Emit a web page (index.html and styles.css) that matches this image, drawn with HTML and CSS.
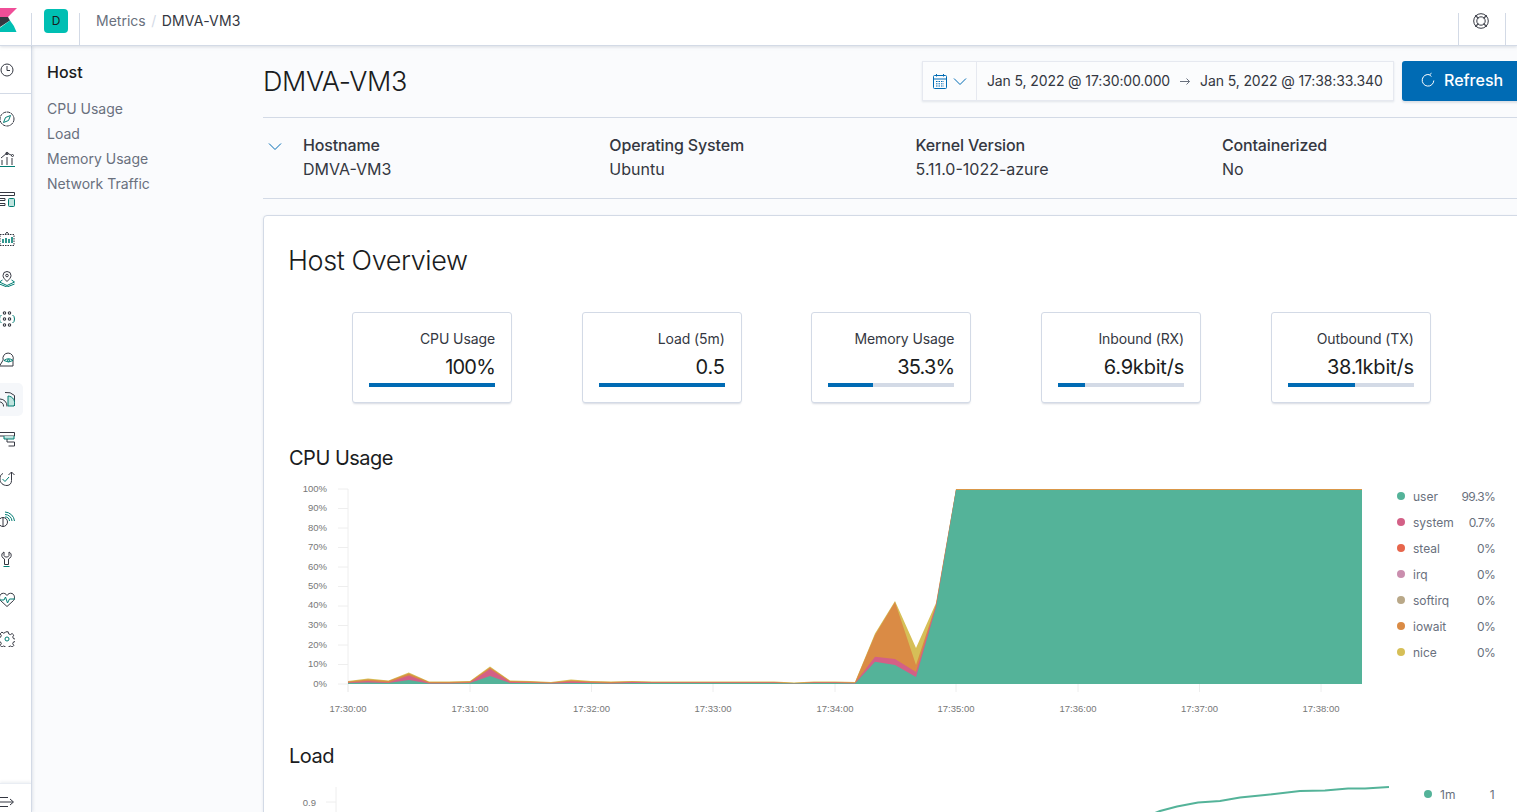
FILE: index.html
```html
<!DOCTYPE html>
<html lang="en">
<head>
<meta charset="utf-8">
<title>DMVA-VM3 - Metrics</title>
<link rel="stylesheet" href="styles.css">
</head>
<body>
<header class="topbar">
  <div class="logo-cell">
    <svg class="logo" viewBox="0 0 18 32" width="18" height="32">
      <polygon points="-6,8 17,8 8,17 -6,17" fill="#f04e98"/>
      <polygon points="-6,17 8,17 10,20.500 -6,31" fill="#343741"/>
      <path d="M-6 32 L10 20.500 Q14 25 16.500 32 Z" fill="#00bfb3"/>
    </svg>
  </div>
  <div class="space-cell"><span class="space-badge">D</span></div>
  <nav class="crumbs">
    <span class="crumb-link">Metrics</span>
    <span class="crumb-sep">/</span>
    <span class="crumb-current">DMVA-VM3</span>
  </nav>
  <div class="help-cell">
    <svg viewBox="0 0 16 16" width="16" height="16" fill="none" stroke="#343741">
      <circle cx="8" cy="8" r="7.300"/>
      <circle cx="8" cy="8" r="4.200"/>
      <path d="M2.500 2l3 3.200M2 2.500l3.200 3M13.500 2l-3 3.200M14 2.500l-3.200 3M2.500 14l3-3.200M2 13.500l3.200-3M13.500 14l-3-3.200M14 13.500l-3.200-3"/>
    </svg>
  </div>
  <div class="end-cell"></div>
</header>

<div class="shell">
  <aside class="rail">
    <div class="rail-top">
      <svg class="ico" viewBox="0 0 16 16" fill="none" stroke="#343741"><circle cx="8" cy="8" r="6"/><path d="M8 4v4.500h3"/></svg>
    </div>
    <ul class="rail-list">
      <li class="rail-item"><svg class="ico" viewBox="0 0 16 16" fill="none" stroke="#343741"><circle cx="8" cy="8" r="7" stroke-dasharray="3.500 .6"/><path d="M11.500 4.500L9.500 9.500 4.500 11.500 6.500 6.500Z" stroke="#017d73"/></svg></li>
      <li class="rail-item"><svg class="ico" viewBox="0 0 16 16" fill="none" stroke="#343741"><path d="M2 7l6-5 5 2.500"/><circle cx="8" cy="2.500" r="1.200"/><circle cx="13.500" cy="4.500" r="1"/><path d="M3 9v5M8 6v8M13 7v7"/><path d="M0 15.500h16" stroke="#017d73"/></svg></li>
      <li class="rail-item"><svg class="ico" viewBox="0 0 16 16" fill="none" stroke="#343741"><path d="M0 1.500h15.500v3H0"/><path d="M0 7.500h6v2H0M0 12.500h6v2H0"/><rect x="9.500" y="7.500" width="6" height="8" rx="1" stroke="#017d73" fill="#bfe4df"/></svg></li>
      <li class="rail-item"><svg class="ico" viewBox="0 0 16 16" fill="none" stroke="#343741"><path d="M1 3.500h14v11H1z" stroke-dasharray="1.500 1"/><path d="M6 3.500L8 1l2 2.500"/><path d="M4 12V8M7 12V7M10 12V8M13 12V6" stroke="#017d73" stroke-width="1.600"/></svg></li>
      <li class="rail-item"><svg class="ico" viewBox="0 0 16 16" fill="none" stroke="#343741"><path d="M8 10.500C5.500 8 4 6.500 4 4.500a4 4 0 0 1 8 0c0 2-1.500 3.500-4 6z"/><circle cx="8" cy="4.500" r="1.300"/><path d="M3.500 9L.5 11 8 14.500 15.500 11l-3-2M.5 13L8 16l7.500-3" stroke="#017d73"/></svg></li>
      <li class="rail-item"><svg class="ico" viewBox="0 0 16 16" fill="none" stroke="#343741"><g stroke-width="1.100"><circle cx="5.500" cy="2" r="1.200"/><circle cx="10.500" cy="2" r="1.200"/><circle cx="5.500" cy="8" r="1.200"/><circle cx="10.500" cy="8" r="1.200"/><circle cx="5.500" cy="14" r="1.200"/><circle cx="10.500" cy="14" r="1.200"/></g><path d="M2.500 4Q.5 5 .5 8t2 4M13.500 4q2 1 2 4t-2 4" stroke="#017d73"/></svg></li>
      <li class="rail-item"><svg class="ico" viewBox="0 0 16 16" fill="none" stroke="#343741"><path d="M.5 15L4.200 9A5.200 5.200 0 1 1 14 9V15Z"/><path d="M5 9.500Q9.500 6 14 9.500 9.500 12.500 5 9.500z" stroke="#017d73"/><circle cx="9.500" cy="9.300" r="1" stroke="#017d73"/></svg></li>
      <li class="rail-item is-active"><svg class="ico" viewBox="0 0 16 16" fill="none" stroke="#343741"><path d="M1 8a7 7 0 0 1 7 7.500M0 11a4 4 0 0 1 4.500 4.500"/><path d="M6 1.500a11 11 0 0 1 9.500 3V15"/><path d="M9 5a7 7 0 0 1 6 10H9z" stroke="#017d73" fill="#bfe4df"/></svg></li>
      <li class="rail-item"><svg class="ico" viewBox="0 0 16 16" fill="none" stroke="#343741"><path d="M0 1.500h15.500v3.500H0"/><path d="M5 5v3h10V5" stroke="#017d73" fill="#bfe4df"/><path d="M8 8v3h7.500v4H9.500"/></svg></li>
      <li class="rail-item"><svg class="ico" viewBox="0 0 16 16" fill="none" stroke="#343741"><path d="M4 2.500C1.500 3.500 1 5.500 1 8c0 4 3 6.500 7 6.500 3 0 4.500-2.500 4.500-5V1"/><path d="M9.500 4l3-3 3 3"/><path d="M3.500 8l2.500 2.500L10 6" stroke="#017d73"/></svg></li>
      <li class="rail-item"><svg class="ico" viewBox="0 0 16 16" fill="none" stroke="#343741"><path d="M6 1a10 10 0 0 1 9.500 9M6 3.500a7 7 0 0 1 7 6.500M6 6a4 4 0 0 1 4.500 4" stroke="#017d73"/><circle cx="4" cy="11" r="4.500"/><path d="M4 6.500v9"/></svg></li>
      <li class="rail-item"><svg class="ico" viewBox="0 0 16 16" fill="none" stroke="#343741"><path d="M5 1C3 2 2.500 3.500 3 5.500c.4 1.200 1.500 2 2.500 2.500v5.500h4V8c1-.5 2.100-1.300 2.500-2.500C12.500 3.500 12 2 10 1v3.500L8.700 6H6.300L5 4.500z"/><path d="M4.500 15.500h6" stroke="#017d73"/></svg></li>
      <li class="rail-item"><svg class="ico" viewBox="0 0 16 16" fill="none" stroke="#343741"><path d="M8 15.500L1.500 9.500C0 8 0 3.500 3 2.500c2-.7 4 .2 5 2 1-1.800 3-2.700 5-2 3 1 3 5.500 1.500 7z"/><path d="M0 9h5l1.500-3 2 6L10.500 8H16" stroke="#017d73"/></svg></li>
      <li class="rail-item"><svg class="ico" viewBox="0 0 16 16" fill="none" stroke="#343741"><path d="M6.800.8h2.400l.4 2 1.800.8 1.700-1.100 1.700 1.700-1.100 1.700.8 1.800 2 .4v2.400l-2 .4-.8 1.800 1.100 1.700-1.700 1.700-1.700-1.100-1.800.8-.4 2H6.800l-.4-2-1.800-.8-1.700 1.100-1.700-1.700 1.100-1.700-.8-1.800-2-.4V6.700l2-.4.8-1.800-1.100-1.700 1.700-1.700 1.700 1.100 1.800-.8z"/><circle cx="8" cy="8" r="2" stroke="#017d73"/></svg></li>
    </ul>
    <div class="rail-foot">
      <svg class="ico" viewBox="0 0 16 16" fill="none" stroke="#343741"><path d="M0 3.500h9M0 8h14M0 12.500h9M11 5l3.500 3-3.500 3"/></svg>
    </div>
  </aside>

  <aside class="sidenav">
    <h2 class="sidenav-title">Host</h2>
    <ul class="sidenav-list">
      <li>CPU Usage</li>
      <li>Load</li>
      <li>Memory Usage</li>
      <li>Network Traffic</li>
    </ul>
  </aside>

  <main class="main">
    <div class="page-head">
      <h1 class="page-title">DMVA-VM3</h1>
      <div class="time-picker">
        <div class="time-quick">
          <svg viewBox="0 0 16 16" width="16" height="16" fill="none" stroke="#006bb4"><rect x="1.500" y="2.500" width="13" height="13" rx="1"/><path d="M1.500 6h13"/><path d="M4.500 1v2.500M11.500 1v2.500"/><path d="M4 8.500h8M4 10.800h8M4 13h8" stroke-dasharray="1.500 1"/></svg>
          <svg viewBox="0 0 16 16" width="16" height="16" fill="none" stroke="#006bb4"><path d="M2 5.500l6 6 6-6"/></svg>
        </div>
        <div class="time-range">
          <span>Jan 5, 2022 @ 17:30:00.000</span>
          <svg viewBox="0 0 12 12" width="12" height="12" fill="none" stroke="#69707d"><path d="M1 6.500h9.500M7.500 3.500l3 3-3 3"/></svg>
          <span>Jan 5, 2022 @ 17:38:33.340</span>
        </div>
      </div>
      <button class="refresh" type="button">
        <svg viewBox="0 0 16 16" width="16" height="16" fill="none" stroke="#fff"><path d="M9.500 2.700a5.800 5.800 0 1 0 4.300 5.800"/><path d="M11.500 1.200l-2 1.600 1.800 1.800"/></svg>
        <span>Refresh</span>
      </button>
    </div>

    <section class="summary">
      <svg class="summary-chev" viewBox="0 0 16 16" width="16" height="16" fill="none" stroke="#006bb4"><path d="M2 5.500l6 6 6-6"/></svg>
      <dl class="summary-col"><dt>Hostname</dt><dd>DMVA-VM3</dd></dl>
      <dl class="summary-col"><dt>Operating System</dt><dd>Ubuntu</dd></dl>
      <dl class="summary-col"><dt>Kernel Version</dt><dd>5.11.0-1022-azure</dd></dl>
      <dl class="summary-col"><dt>Containerized</dt><dd>No</dd></dl>
    </section>

    <section class="panel">
      <h2 class="panel-title">Host Overview</h2>
      <div class="stats">
        <article class="stat"><div class="stat-label">CPU Usage</div><div class="stat-value stat-pct">100%</div><div class="meter"><div class="meter-fill" style="width:100%"></div></div></article>
        <article class="stat"><div class="stat-label">Load (5m)</div><div class="stat-value">0.5</div><div class="meter"><div class="meter-fill" style="width:100%"></div></div></article>
        <article class="stat"><div class="stat-label">Memory Usage</div><div class="stat-value stat-pct">35.3%</div><div class="meter"><div class="meter-fill" style="width:35.3%"></div></div></article>
        <article class="stat"><div class="stat-label">Inbound (RX)</div><div class="stat-value">6.9kbit/s</div><div class="meter"><div class="meter-fill" style="width:21%"></div></div></article>
        <article class="stat"><div class="stat-label">Outbound (TX)</div><div class="stat-value">38.1kbit/s</div><div class="meter"><div class="meter-fill" style="width:53%"></div></div></article>
      </div>

      <h3 class="chart-title cpu-title">CPU Usage</h3>
      <div class="chart-row cpu-row">
        <svg class="chart cpu-chart" viewBox="289 480 1091 240" width="1091" height="240">
          <g class="grid">
            <path d="M348 489V692M338 489h10M338 508.500h10M338 528h10M338 547.500h10M338 567h10M338 586.500h10M338 606h10M338 625.500h10M338 645h10M338 664.500h10M338 684h10"/>
            <path d="M348 684v8M470 684v8M591.500 684v8M713 684v8M835 684v8M956 684v8M1078 684v8M1199.500 684v8M1321 684v8"/>
          </g>
          <g class="ylabels">
            <text x="327" y="492">100%</text><text x="327" y="511">90%</text><text x="327" y="531">80%</text><text x="327" y="550">70%</text><text x="327" y="570">60%</text><text x="327" y="589">50%</text><text x="327" y="608">40%</text><text x="327" y="628">30%</text><text x="327" y="648">20%</text><text x="327" y="667">10%</text><text x="327" y="687">0%</text>
          </g>
          <g class="xlabels">
            <text x="348" y="712">17:30:00</text><text x="470" y="712">17:31:00</text><text x="591.500" y="712">17:32:00</text><text x="713" y="712">17:33:00</text><text x="835" y="712">17:34:00</text><text x="956" y="712">17:35:00</text><text x="1078" y="712">17:36:00</text><text x="1199.500" y="712">17:37:00</text><text x="1321" y="712">17:38:00</text>
          </g>
          <path fill="#d6bf57" d="M348 684V681L368 678.500 388.500 680.500 408.800 672.500 429 681.500 449 681.500 470 681 490 666.500 510 680.500 530 681 551 682 571 679.500 591 681 611 681.500 632 681 652 681.500 672 681.500 693 681.500 713 681.500 733 681.500 754 681.500 774 681.500 794 682.500 814 681.500 835 681.500 855 682 875 633.500 895 601 916 648 936 603 956 489H1362V684Z"/>
          <path fill="#da8b45" d="M348 684V681.500L368 679.500 388.500 681 408.800 673.500 429 682 449 682 470 681.500 490 667.500 510 681 530 681.500 551 682.500 571 680.500 591 681.500 611 682 632 681.500 652 682 672 682 693 682 713 682 733 682 754 682 774 682 794 683 814 682 835 682 855 682.500 875 635 895 602 916 665 936 604.500 956 489.300H1362V684Z"/>
          <path fill="#d36086" d="M348 684V682.500L368 681 388.500 682.500 408.800 675.500 429 683 449 683 470 682.500 490 669 510 682 530 682.500 551 683 571 681.500 591 682.500 611 683 632 682 652 682.500 672 682.500 693 682.500 713 682.500 733 682.500 754 682.500 774 682.500 794 683.500 814 682.500 835 682.500 855 683 875 656.700 895 659 916 672 936 605.500 956 490H1362V684Z"/>
          <path fill="#54b399" d="M348 684V683L368 682.500 388.500 683 408.800 680 429 683.500 449 683.500 470 683 490 676 510 683 530 683 551 683.500 571 683 591 683 611 683.500 632 683 652 683 672 683 693 683 713 683 733 683 754 683 774 683 794 683.500 814 683 835 683 855 683.500 875 661.700 895 665 916 677 936 607.500 956 490H1362V684Z"/>
        </svg>
        <ul class="legend">
          <li class="legend-item"><i class="dot dot-user"></i><span class="legend-name">user</span><span class="legend-val">99.3%</span></li>
          <li class="legend-item"><i class="dot dot-system"></i><span class="legend-name">system</span><span class="legend-val">0.7%</span></li>
          <li class="legend-item"><i class="dot dot-steal"></i><span class="legend-name">steal</span><span class="legend-val">0%</span></li>
          <li class="legend-item"><i class="dot dot-irq"></i><span class="legend-name">irq</span><span class="legend-val">0%</span></li>
          <li class="legend-item"><i class="dot dot-softirq"></i><span class="legend-name">softirq</span><span class="legend-val">0%</span></li>
          <li class="legend-item"><i class="dot dot-iowait"></i><span class="legend-name">iowait</span><span class="legend-val">0%</span></li>
          <li class="legend-item"><i class="dot dot-nice"></i><span class="legend-name">nice</span><span class="legend-val">0%</span></li>
        </ul>
      </div>

      <h3 class="chart-title load-title">Load</h3>
      <div class="chart-row load-row">
        <svg class="chart load-chart" viewBox="289 780 1121 60" width="1121" height="60">
          <g class="grid"><path d="M336 787V840M326 802h10"/></g>
          <g class="ylabels"><text x="316" y="806">0.9</text></g>
          <path class="load-line" d="M1150 815L1160 811 1177 806.500 1198 802.500 1220 801 1240 797.500 1265 795 1300 791 1325 790.500 1348 788.500 1365 788.500 1389 787"/>
        </svg>
        <ul class="legend legend-load">
          <li class="legend-item"><i class="dot dot-user"></i><span class="legend-name">1m</span><span class="legend-val">1</span></li>
        </ul>
      </div>
    </section>
  </main>
</div>
</body>
</html>
```

FILE: styles.css
```css
* { box-sizing: border-box; }
html, body { height: 100%; }
body {
  margin: 0;
  overflow: hidden;
  width: 1517px;
  height: 812px;
  font-family: Inter, "Liberation Sans", sans-serif;
  font-size: 14px;
  color: #343741;
  background: #fafbfd;
}
h1, h2, h3, dl, dd, dt, ul { margin: 0; padding: 0; }
ul { list-style: none; }

/* top bar */
.topbar {
  display: flex;
  align-items: stretch;
  height: 46px;
  background: #fff;
  border-bottom: 1px solid #d3dae6;
  box-shadow: 0 1px 3px rgba(152, 162, 179, .35);
  position: relative;
  z-index: 2;
}
.logo-cell { width: 32px; flex: none; position: relative; }
.logo { display: block; position: absolute; left: 0; top: 0; overflow: hidden; }
.space-cell {
  width: 48px;
  flex: none;
  display: flex;
  justify-content: center;
  padding-top: 9px;
  position: relative;
}
.space-cell::before, .space-cell::after, .help-cell::before, .help-cell::after {
  content: "";
  position: absolute;
  top: 13px;
  bottom: 0;
  width: 1px;
  background: #d3dae6;
}
.space-cell::before { left: -1px; }
.space-cell::after { right: 0; }
.space-badge {
  width: 24px;
  height: 24px;
  border-radius: 4px;
  background: #00bfb3;
  color: #1a1c21;
  font-size: 12px;
  line-height: 24px;
  text-align: center;
}
.crumbs { display: flex; gap: 5.5px; padding: 12px 0 0 16px; line-height: 17px; flex: 1; height: 30px; }
.crumb-link { color: #69707d; }
.crumb-sep { color: #d3dae6; }
.crumb-current { color: #343741; letter-spacing: .2px; }
.help-cell {
  width: 47px;
  flex: none;
  position: relative;
  padding: 13px 0 0 15px;
}
.help-cell svg { display: block; }
.help-cell::before { left: 0; }
.help-cell::after { right: -1px; }
.end-cell { width: 12px; flex: none; }

/* shell */
.shell { display: flex; height: 766px; }

/* rail */
.rail {
  width: 32px;
  flex: none;
  display: flex;
  flex-direction: column;
  background: #fff;
  border-right: 1px solid #d3dae6;
  box-shadow: 1px 0 3px rgba(152, 162, 179, .25);
  overflow: hidden;
}
.ico { display: block; width: 16px; height: 16px; margin-left: -1px; }
.rail-top {
  height: 48px;
  flex: none;
  display: flex;
  align-items: center;
  border-bottom: 1px solid #d3dae6;
}
.rail-list { padding-top: 5px; }
.rail-item {
  height: 40px;
  display: flex;
  align-items: center;
}
.rail-item.is-active { position: relative; }
.rail-item.is-active::before {
  content: "";
  position: absolute;
  left: 0;
  top: 4px;
  width: 23px;
  height: 33px;
  background: #f5f7fa;
  border-radius: 0 5px 5px 0;
}
.rail-item.is-active .ico { position: relative; }
.rail-foot {
  margin-top: auto;
  height: 29px;
  flex: none;
  display: flex;
  align-items: center;
  padding-top: 8px;
  border-top: 1px solid #e9edf3;
  box-shadow: 0 -1px 3px rgba(152, 162, 179, .2);
}

/* side nav */
.sidenav { width: 231px; flex: none; padding: 16px 0 0 15px; }
.sidenav-title { font-size: 16px; font-weight: 500; line-height: 21px; color: #1a1c21; }
.sidenav-list { margin-top: 13px; }
.sidenav-list li { height: 25px; line-height: 25px; color: #69707d; }

/* main */
.main { width: 1300px; flex: none; }
.page-head { display: flex; align-items: flex-start; padding-top: 15px; height: 72px; border-bottom: 1px solid #d3dae6; }
.page-title {
  font-size: 27px;
  font-weight: 300;
  line-height: 40px;
  letter-spacing: -.4px;
  color: #1a1c21;
  padding-top: 1px;
  width: 659px;
  flex: none;
}
.time-picker {
  display: flex;
  width: 472px;
  height: 40px;
  flex: none;
  background: #fbfcfd;
  border: 1px solid #e6e9f0;
  box-shadow: 0 1px 2px rgba(152, 162, 179, .25);
}
.time-quick {
  width: 54px;
  flex: none;
  display: flex;
  align-items: center;
  gap: 4px;
  padding-left: 9px;
  border-right: 1px solid #e6e9f0;
}
.time-range { display: flex; align-items: center; gap: 9px; padding: 0 0 1px 10px; white-space: nowrap; color: #343741; letter-spacing: -.12px; }
.refresh {
  margin-left: 8px;
  width: 130px;
  height: 40px;
  flex: none;
  display: flex;
  align-items: center;
  gap: 8px;
  padding: 0 0 2px 18px;
  border: 0;
  border-radius: 3px;
  background: #006bb4;
  color: #fff;
  font-family: inherit;
  font-size: 16px;
  font-weight: 500;
  box-shadow: 0 2px 2px rgba(152, 162, 179, .3);
}

.summary {
  display: flex;
  height: 81px;
  padding-top: 17px;
  border-bottom: 1px solid #d3dae6;
  position: relative;
  padding-left: 40px;
  font-size: 16px;
}
.summary-chev { position: absolute; left: 4px; top: 20px; }
.summary-col { width: 306.3px; flex: none; }
.summary-col dt { font-weight: 500; line-height: 21px; color: #343741; letter-spacing: -.15px; }
.summary-col dd { line-height: 21px; margin-top: 3px; }

.panel {
  margin-top: 16px;
  height: 800px;
  padding: 0 0 0 25px;
  background: #fff;
  border: 1px solid #d3dae6;
  border-radius: 4px 0 0 0;
  box-shadow: 0 1px 3px rgba(152, 162, 179, .2);
}
.panel-title {
  font-size: 27px;
  font-weight: 300;
  line-height: 40px;
  letter-spacing: -.4px;
  color: #1a1c21;
  margin-left: -1px;
  padding-top: 25px;
  box-sizing: content-box;
  height: 40px;
}
.stats { display: flex; gap: 69.7px; margin: 31px 0 0 63px; }
.stat {
  width: 160px;
  height: 91px;
  flex: none;
  padding: 16px 16px 0;
  background: #fff;
  border: 1px solid #d3dae6;
  border-radius: 3px;
  box-shadow: 0 2px 2px -1px rgba(152, 162, 179, .4);
  text-align: right;
}
.stat-label { line-height: 20px; letter-spacing: -.1px; }
.stat-value { font-size: 20px; line-height: 24px; margin-top: 6px; color: #1a1c21; letter-spacing: -.2px; }
.stat-pct { letter-spacing: -.8px; }
.meter { height: 4px; background: #d3dae6; margin-top: 4px; }
.meter-fill { height: 100%; background: #006bb4; }

.chart-title { font-size: 20px; font-weight: 400; line-height: 24px; letter-spacing: -.5px; color: #1a1c21; }
.cpu-title { margin-top: 43px; }
.load-title { margin-top: 8px; }
.chart-row { display: flex; align-items: flex-start; }
.cpu-row { margin-top: 10px; height: 256px; }
.load-row { margin-top: 12px; }
.chart { display: block; flex: none; overflow: hidden; }
.grid path { fill: none; stroke: #eeeeee; stroke-width: 1; }
.ylabels text { font: 9.5px "Liberation Sans", sans-serif; fill: #777; text-anchor: end; }
.xlabels text { font: 9.5px "Liberation Sans", sans-serif; fill: #777; text-anchor: middle; }
.load-line { fill: none; stroke: #54b399; stroke-width: 2; }

.legend { width: 100px; margin-left: 15px; flex: none; padding-top: 3px; font-size: 12px; color: #69707d; }
.legend-item { display: flex; align-items: center; height: 26px; }
.dot { width: 8px; height: 8px; border-radius: 50%; margin: 0 8px 0 2px; flex: none; }
.dot-user { background: #54b399; }
.dot-system { background: #d36086; }
.dot-steal { background: #e7664c; }
.dot-irq { background: #ca8eae; }
.dot-softirq { background: #b9a888; }
.dot-iowait { background: #da8b45; }
.dot-nice { background: #d6bf57; }
.legend-name { flex: 1; }
.legend-val { width: 44px; text-align: right; letter-spacing: -.7px; }
.legend-load { margin-left: 12px; width: 72px; padding-top: 1px; }
```
